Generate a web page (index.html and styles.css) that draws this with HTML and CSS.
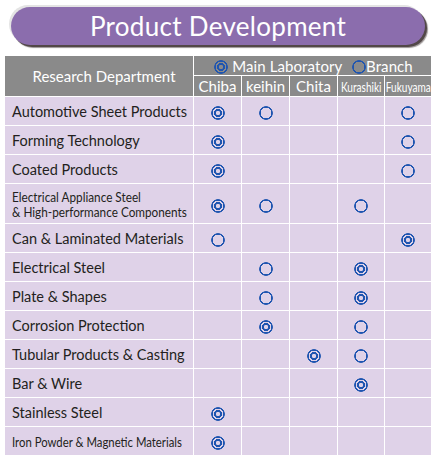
FILE: index.html
```html
<!DOCTYPE html>
<html lang="en">
<head>
  <meta charset="UTF-8" />
  <title>Product Development</title>
  <link rel="stylesheet" href="styles.css">
</head>
<body>
  <div class="banner">
    <h1>Product Development</h1>
  </div>

  <table class="matrix">
    <colgroup>
      <col class="c-dept">
      <col class="c-site">
      <col class="c-site">
      <col class="c-site">
      <col class="c-site-sm">
      <col class="c-site-sm">
    </colgroup>
    <thead>
      <tr class="legend-row">
        <th rowspan="2" class="dept-head">Research Department</th>
        <th colspan="5" class="legend">
          <span class="mark main"></span> Main Laboratory
          <span class="mark branch"></span>Branch
        </th>
      </tr>
      <tr class="site-row">
        <th>Chiba</th>
        <th>keihin</th>
        <th>Chita</th>
        <th><span class="squeeze">Kurashiki</span></th>
        <th><span class="squeeze">Fukuyama</span></th>
      </tr>
    </thead>
    <tbody>
      <tr>
        <td class="dept">Automotive Sheet Products</td>
        <td><span class="mark main"></span></td>
        <td><span class="mark branch"></span></td>
        <td></td>
        <td></td>
        <td><span class="mark branch"></span></td>
      </tr>
      <tr>
        <td class="dept">Forming Technology</td>
        <td><span class="mark main"></span></td>
        <td></td>
        <td></td>
        <td></td>
        <td><span class="mark branch"></span></td>
      </tr>
      <tr>
        <td class="dept">Coated Products</td>
        <td><span class="mark main"></span></td>
        <td></td>
        <td></td>
        <td></td>
        <td><span class="mark branch"></span></td>
      </tr>
      <tr class="tall">
        <td class="dept small"><span class="narrow-text">Electrical Appliance Steel<br>&amp; High-performance Components</span></td>
        <td><span class="mark main"></span></td>
        <td><span class="mark branch"></span></td>
        <td></td>
        <td><span class="mark branch"></span></td>
        <td></td>
      </tr>
      <tr>
        <td class="dept">Can &amp; Laminated Materials</td>
        <td><span class="mark branch"></span></td>
        <td></td>
        <td></td>
        <td></td>
        <td><span class="mark main"></span></td>
      </tr>
      <tr>
        <td class="dept">Electrical Steel</td>
        <td></td>
        <td><span class="mark branch"></span></td>
        <td></td>
        <td><span class="mark main"></span></td>
        <td></td>
      </tr>
      <tr>
        <td class="dept">Plate &amp; Shapes</td>
        <td></td>
        <td><span class="mark branch"></span></td>
        <td></td>
        <td><span class="mark main"></span></td>
        <td></td>
      </tr>
      <tr>
        <td class="dept">Corrosion Protection</td>
        <td></td>
        <td><span class="mark main"></span></td>
        <td></td>
        <td><span class="mark branch"></span></td>
        <td></td>
      </tr>
      <tr>
        <td class="dept">Tubular Products &amp; Casting</td>
        <td></td>
        <td></td>
        <td><span class="mark main"></span></td>
        <td><span class="mark branch"></span></td>
        <td></td>
      </tr>
      <tr>
        <td class="dept">Bar &amp; Wire</td>
        <td></td>
        <td></td>
        <td></td>
        <td><span class="mark main"></span></td>
        <td></td>
      </tr>
      <tr>
        <td class="dept">Stainless Steel</td>
        <td><span class="mark main"></span></td>
        <td></td>
        <td></td>
        <td></td>
        <td></td>
      </tr>
      <tr>
        <td class="dept small"><span class="narrow-text iron">Iron Powder &amp; Magnetic Materials</span></td>
        <td><span class="mark main"></span></td>
        <td></td>
        <td></td>
        <td></td>
        <td></td>
      </tr>
    </tbody>
  </table>
</body>
</html>
```

FILE: styles.css
```css
body {
  margin: 0;
  background-color: #fff;
  font-family: Lato, 'Open Sans', sans-serif;
  color: #231f20;
}

.banner {
  margin: 7px 15px 0 11px;
  height: 38px;
  background-color: #8b6dad;
  border-radius: 19px;
  box-shadow: -2px -2px 0 #e4e4e4, 2px 2px 0 #524848, 3px 3px 1px #9a9494;
  display: flex;
  align-items: center;
  justify-content: center;
}

.banner h1 {
  margin: 0;
  font-size: 26px;
  font-weight: normal;
  color: #fff;
  letter-spacing: 0.3px;
}

.matrix {
  margin: 10px 0 0 4px;
  width: 428px;
  table-layout: fixed;
  border-collapse: separate;
  border-spacing: 1px;
}

.c-dept { width: 188px; }
.c-site { width: 47px; }
.c-site-sm { width: 46px; }

.matrix th {
  background-color: #8a8a8a;
  color: #fff;
  font-weight: normal;
  padding: 0;
  white-space: nowrap;
}

.legend-row th {
  height: 19px;
}

.site-row th {
  height: 20px;
  font-size: 15px;
}

.dept-head {
  font-size: 15px;
  padding-left: 10px !important;
}

.legend {
  font-size: 15px;
  letter-spacing: 0.1px;
  padding-left: 2px !important;
}

.legend .mark {
  vertical-align: -2px;
}

.legend .mark.branch {
  margin-left: 6px;
}

.squeeze {
  display: inline-block;
  font-size: 14px;
  transform: scaleX(0.72);
  margin: 0 -9px;
}

.matrix td {
  background-color: #dfd2e8;
  height: 28px;
  padding: 0;
  text-align: center;
  vertical-align: middle;
}

.matrix tr.tall td {
  height: 39px;
}

.matrix td.dept {
  text-align: left;
  padding-left: 7px;
  font-size: 14.5px;
  white-space: nowrap;
}

.matrix td.small {
  font-size: 14px;
  line-height: 15px;
}

.narrow-text {
  display: inline-block;
  transform: scaleX(0.84);
  transform-origin: left center;
}

.narrow-text.iron {
  transform: scaleX(0.81);
}

.mark {
  display: inline-block;
  width: 14px;
  height: 14px;
  border-radius: 50%;
  vertical-align: middle;
}

.mark.branch {
  background: radial-gradient(circle, transparent 5.2px, #1f55b0 5.5px 6.8px, transparent 7.1px);
}

.mark.main {
  background: radial-gradient(circle, transparent 2px, #1f55b0 2.3px 3.9px, transparent 4.2px 5.2px, #1f55b0 5.5px 6.8px, transparent 7.1px);
}
```
